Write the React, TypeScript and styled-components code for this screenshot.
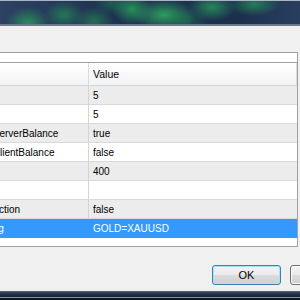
import styled, { createGlobalStyle } from "styled-components";

const GlobalStyle = createGlobalStyle`
  html, body {
    margin: 0;
    padding: 0;
    overflow: hidden;
  }
  body {
    font-family: "Liberation Sans", Arial, sans-serif;
  }
`;

const Screen = styled.div`
  width: 300px;
  height: 300px;
  overflow: hidden;
  display: flex;
  flex-direction: column;
`;

const Wallpaper = styled.div`
  height: 23px;
  flex-shrink: 0;
  border-top: 1px solid #a9b3c3;
  border-bottom: 2px solid #6f7a8b;
  background:
    radial-gradient(ellipse 22px 16px at 28px 22px, rgba(40, 160, 90, 0.8), transparent),
    radial-gradient(ellipse 20px 14px at 64px 14px, rgba(35, 140, 85, 0.75), transparent),
    radial-gradient(ellipse 20px 14px at 94px 20px, rgba(35, 135, 80, 0.7), transparent),
    radial-gradient(ellipse 20px 16px at 132px 8px, rgba(40, 160, 90, 0.85), transparent),
    radial-gradient(ellipse 32px 16px at 164px 14px, rgba(45, 170, 95, 0.9), transparent),
    radial-gradient(ellipse 24px 14px at 212px 6px, rgba(40, 155, 90, 0.8), transparent),
    radial-gradient(ellipse 26px 12px at 254px 3px, rgba(40, 150, 90, 0.75), transparent),
    radial-gradient(ellipse 18px 12px at 112px 2px, rgba(30, 120, 75, 0.6), transparent),
    radial-gradient(ellipse 20px 12px at 188px 20px, rgba(30, 120, 75, 0.55), transparent),
    linear-gradient(90deg, #2d4262, #1d3150 40%, #1c304e 80%, #2a3f60),
    #1b2d49;
`;

const Panel = styled.div`
  flex: 1;
  background: #f0f0f0;
  padding-top: 26px;
  display: flex;
  flex-direction: column;
`;

const List = styled.div`
  box-sizing: border-box;
  flex-shrink: 0;
  margin-left: -30px;
  width: 328px;
  height: 195px;
  background: #ffffff;
  border: 1px solid #a0a0a0;
  padding-top: 9px;
  font-size: 10px;
  color: #000;
`;

const Header = styled.div`
  display: grid;
  grid-template-columns: 118px 1fr;
  height: 22px;
  border-top: 1px solid #a0a0a0;
  border-bottom: 1px solid #d5d5d5;
  background: linear-gradient(#ffffff, #f2f3f5);
  font-size: 10.5px;
`;

const HeaderCell = styled.div`
  display: flex;
  align-items: center;
  padding-left: 4px;
  border-right: 1px solid #dcdcdc;
`;

const Row = styled.div<{ $shade: boolean; $selected: boolean }>`
  display: grid;
  grid-template-columns: 118px 1fr;
  height: 18px;
  border-bottom: 1px solid ${(p) => (p.$selected ? "#3399ff" : "#d9d9d9")};
  background: ${(p) => (p.$selected ? "#3399ff" : p.$shade ? "#ececec" : "#ffffff")};
  color: ${(p) => (p.$selected ? "#ffffff" : "#000000")};
`;

const Cell = styled.div<{ $divider?: boolean }>`
  display: flex;
  align-items: center;
  padding-left: 4px;
  white-space: nowrap;
  overflow: hidden;
  border-right: ${(p) => (p.$divider ? "1px solid #d4d4d4" : "none")};
`;

const Footer = styled.div`
  display: flex;
  justify-content: flex-end;
  gap: 9px;
  margin-top: 18px;
  margin-right: -59px;
`;

const Button = styled.button<{ $focused?: boolean }>`
  width: 69px;
  height: 20px;
  padding: 0;
  font-family: "Liberation Sans", Arial, sans-serif;
  font-size: 11px;
  color: #000;
  border-radius: 3px;
  border: 1px solid ${(p) => (p.$focused ? "#3c7fb1" : "#707070")};
  box-shadow: inset 0 0 0 1px ${(p) => (p.$focused ? "#a6e3f7" : "#fbfbfb")};
  background: linear-gradient(#f2f2f2 0%, #ebebeb 50%, #dddddd 51%, #cfcfcf 100%);
`;

const Taskbar = styled.div`
  height: 9px;
  flex-shrink: 0;
  background: linear-gradient(
    #56667c 0px,
    #2a3a50 2px,
    #1a2638 5px,
    #1a2638 6px,
    #2fb3e3 6px,
    #2fb3e3 7px,
    #0b1524 7px
  );
`;

const params = [
  { name: "Slip", value: "5" },
  { name: "Tries", value: "5" },
  { name: "UseServerBalance", value: "true" },
  { name: "UseClientBalance", value: "false" },
  { name: "Wait", value: "400" },
  { name: "", value: "" },
  { name: "Protection", value: "false" },
  { name: "Config", value: "GOLD=XAUUSD" },
];

export default function App() {
  const selected = params.length - 1;
  return (
    <>
      <GlobalStyle />
      <Screen>
        <Wallpaper />
        <Panel>
          <List>
            <Header>
              <HeaderCell></HeaderCell>
              <HeaderCell>Value</HeaderCell>
            </Header>
            {params.map((p, i) => (
              <Row key={i} $shade={i % 2 === 0} $selected={i === selected}>
                <Cell $divider={i !== selected}>{p.name}</Cell>
                <Cell>{p.value}</Cell>
              </Row>
            ))}
          </List>
          <Footer>
            <Button $focused>OK</Button>
            <Button>Cancel</Button>
          </Footer>
        </Panel>
        <Taskbar />
      </Screen>
    </>
  );
}
